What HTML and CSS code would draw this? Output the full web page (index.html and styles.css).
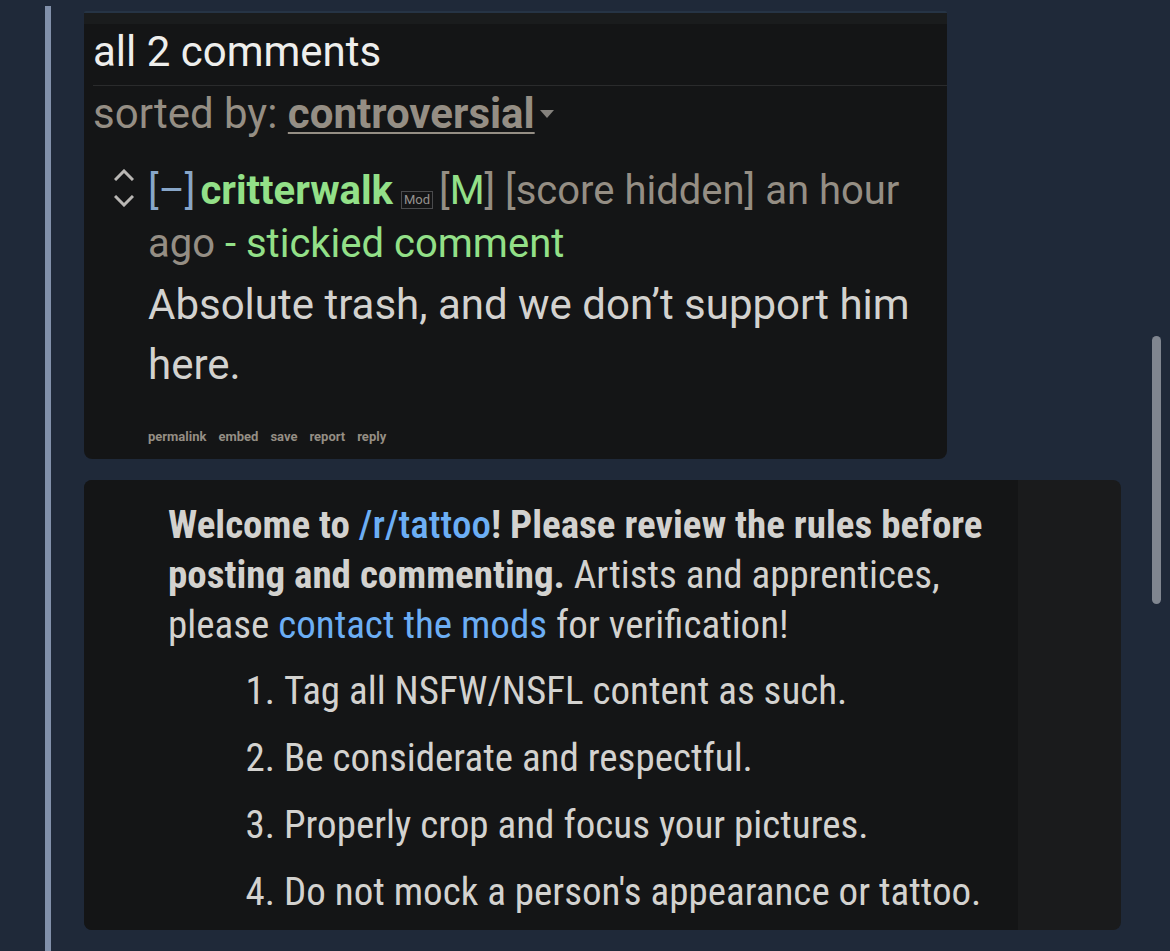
FILE: index.html
```
<!DOCTYPE html>
<html lang="en">
<head>
  <meta charset="UTF-8">
  <meta name="viewport" content="width=device-width, initial-scale=1.0">
  <title>all 2 comments</title>
  <link rel="stylesheet" href="styles.css">
</head>
<body>
  <div class="page">
    <main class="thread">
      <!-- Comments -->
      <section class="card comments">
        <h1>all 2 comments</h1>
        <div class="sort">sorted by: <a href="#">controversial</a><svg class="caret" viewBox="0 0 14 8" aria-hidden="true"><path d="M0 0h14L7 8z"/></svg></div>
        <article class="comment">
          <div class="votes">
            <button type="button" aria-label="upvote"><svg viewBox="0 0 20 12"><path d="M1 11l9-9 9 9"/></svg></button>
            <button type="button" aria-label="downvote"><svg viewBox="0 0 20 12"><path d="M1 1l9 9 9-9"/></svg></button>
          </div>
          <div class="entry">
            <p class="tagline"><a href="#" class="expand">[–]</a><a href="#" class="author">critterwalk</a><span class="badge">Mod</span>[<span class="mod">M</span>] [score hidden] an hour ago <span class="mod">- stickied comment</span></p>
            <p class="body">Absolute trash, and we don’t support him here.</p>
            <nav class="actions">
              <a href="#">permalink</a>
              <a href="#">embed</a>
              <a href="#">save</a>
              <a href="#">report</a>
              <a href="#">reply</a>
            </nav>
          </div>
        </article>
      </section>

      <!-- Rules -->
      <section class="card rules">
        <div class="rules-text">
          <p><strong>Welcome to <a href="#">/r/tattoo</a>! Please review the rules before<br>posting and commenting.</strong> Artists and apprentices,<br>please <a href="#">contact the mods</a> for verification!</p>
          <ol>
            <li>Tag all NSFW/NSFL content as such.</li>
            <li>Be considerate and respectful.</li>
            <li>Properly crop and focus your pictures.</li>
            <li>Do not mock a person's appearance or tattoo.</li>
          </ol>
        </div>
      </section>
    </main>
    <div class="rail"><div class="thumb"></div></div>
  </div>
</body>
</html>
```
FILE: styles.css
```
* {
  margin: 0;
  padding: 0;
  box-sizing: border-box;
}
body {
  font-family: Roboto, sans-serif;
  background: #1f2939;
  color: #d3d2cf;
}
a {
  color: inherit;
  text-decoration: none;
}

/* Page columns */
.page {
  display: flex;
  min-height: 100vh;
  padding: 6px 9px 0 45px;
}
.thread {
  flex: 1;
  border-left: 6px solid #8190aa;
  padding: 5px 31px 21px 33px;
}
.rail {
  width: 9px;
  padding-top: 330px;
}
.thumb {
  height: 268px;
  border-radius: 5px;
  background: #808690;
}

.card {
  background: #141516;
  border-radius: 8px;
  overflow: hidden;
}

/* Comments */
.comments {
  width: 83.2%;
  margin-bottom: 21px;
  padding-bottom: 13px;
  border-top: 2px solid #263445;
  border-radius: 2px 2px 8px 8px;
  background: linear-gradient(#1a1c1d 11px, #141516 11px);
}
.comments h1 {
  margin-left: 9px;
  padding-top: 12px;
  height: 73px;
  font-size: 42px;
  font-weight: 400;
  line-height: 54px;
  color: #eeeeec;
  border-bottom: 1px solid #2a2b2c;
}
.sort {
  padding-left: 9px;
  font-size: 42px;
  line-height: 56px;
  color: #958e84;
}
.sort a {
  font-weight: 700;
  text-decoration: underline;
  text-decoration-thickness: 2px;
  text-underline-offset: 4px;
}
.caret {
  width: 14px;
  height: 8px;
  margin-left: 5px;
  vertical-align: 10px;
  fill: #85827d;
}
.comment {
  display: flex;
  padding: 22px 20px 0 30px;
}
.votes {
  display: flex;
  flex-direction: column;
  gap: 14px;
  width: 34px;
  padding-top: 5px;
}
.votes button {
  width: 20px;
  height: 12px;
  background: none;
  border: none;
  cursor: pointer;
}
.votes svg {
  display: block;
  width: 20px;
  height: 12px;
  fill: none;
  stroke: #b9b7b4;
  stroke-width: 3;
}
.entry {
  flex: 1;
}
.tagline {
  font-size: 40px;
  line-height: 53px;
  color: #958e84;
}
.expand {
  margin-right: 5px;
  color: #88a6c8;
}
.author {
  font-weight: 700;
  color: #93e088;
}
.mod {
  color: #93e088;
}
.badge {
  display: inline-block;
  margin: 0 6px 0 8px;
  padding: 0 2px;
  border: 1px solid #4a4b4d;
  font-size: 13px;
  line-height: 16px;
  color: #94928f;
}
.body {
  padding-top: 5px;
  font-size: 42px;
  line-height: 60px;
}
.actions {
  display: flex;
  gap: 12px;
  margin-top: 33px;
  font-size: 13px;
  font-weight: 700;
  line-height: 18px;
  color: #958e84;
}

/* Rules */
.rules {
  padding-right: 103px;
  background: #1a1b1c;
}
.rules-text {
  padding: 20px 0 4px 84px;
  background: #141516;
  font-family: "Roboto Condensed", Roboto, sans-serif;
  font-size: 39px;
  line-height: 50px;
  white-space: nowrap;
}
.rules-text a {
  color: #6caef4;
}
.rules-text strong a {
  font-weight: 500;
}
.rules-text ol {
  padding: 8px 0 0 116px;
}
.rules-text li {
  line-height: 67px;
}
```
